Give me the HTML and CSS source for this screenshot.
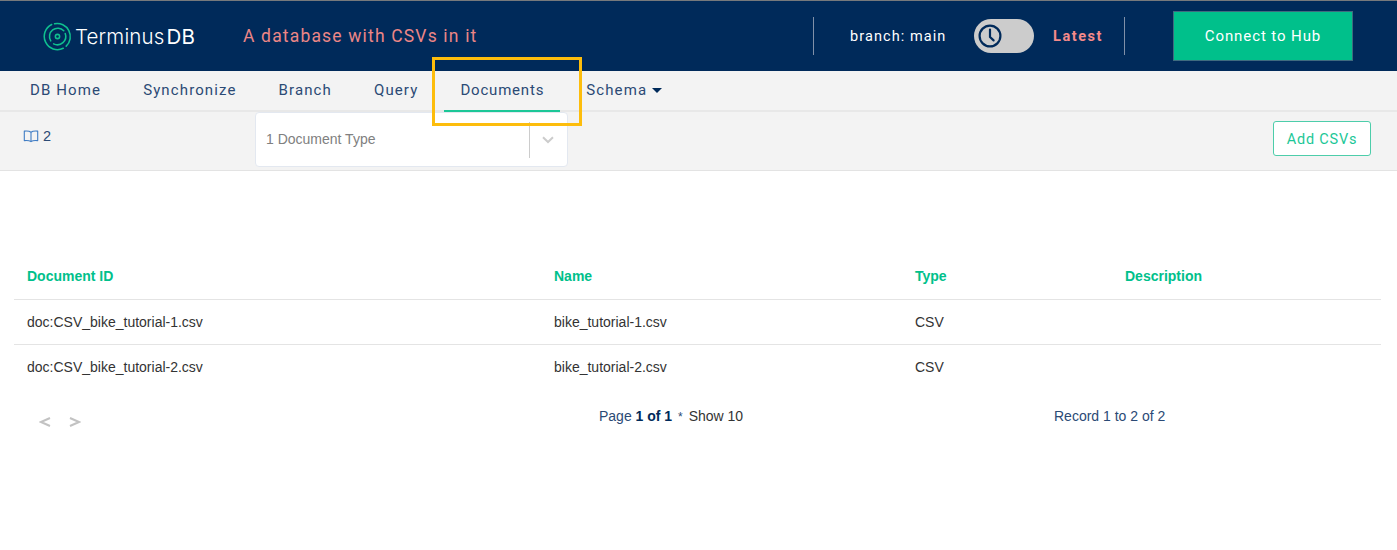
FILE: index.html
```html
<!DOCTYPE html>
<html lang="en">
<head>
  <meta charset="UTF-8" />
  <title>TerminusDB - Documents</title>
  <link rel="stylesheet" href="styles.css">
</head>
<body>
  <header class="topbar">
    <div class="brand">
      <svg class="brand-logo" viewBox="0 0 30 30" width="29" height="29" fill="none" stroke="#0fc08f" stroke-width="1.6" stroke-linecap="round">
        <path d="M9 2.6A13.6 13.6 0 0 0 21 27.2" />
        <path d="M24 25A13.6 13.6 0 0 0 12 1.8" />
        <path d="M8 19.5A8.6 8.6 0 0 1 21.5 9" />
        <path d="M23 12A8.6 8.6 0 0 1 11 22.6" />
        <circle cx="15" cy="15" r="2.2" />
      </svg>
      <span class="brand-name">Terminus<span class="brand-db">DB</span></span>
    </div>
    <div class="db-title">A database with CSVs in it</div>
    <div class="branch-box">
      <span class="branch-name">branch: main</span>
      <span class="time-toggle">
        <svg viewBox="0 0 26 26" width="26" height="26" fill="none" stroke="#002a5a" stroke-width="2.2" stroke-linecap="round" stroke-linejoin="round">
          <circle cx="13" cy="13" r="10.4" />
          <path d="M13 6.5V14l3.6 3.4" />
        </svg>
      </span>
      <span class="branch-latest">Latest</span>
    </div>
    <a class="hub-btn" href="#">Connect to Hub</a>
  </header>

  <nav class="tabs">
    <a href="#">DB Home</a>
    <a href="#">Synchronize</a>
    <a href="#">Branch</a>
    <a href="#">Query</a>
    <a class="active" href="#">Documents</a>
    <a href="#">Schema <span class="caret"></span></a>
  </nav>

  <section class="toolbar">
    <div class="doc-count">
      <svg viewBox="0 0 16 14" width="16" height="14" fill="none" stroke="#3f7cc4" stroke-width="1.1" stroke-linejoin="round">
        <path d="M8 3.2C6.5 2 4 1.8 1.3 2.1V11.6C4 11.3 6.5 11.5 8 12.6C9.5 11.5 12 11.3 14.7 11.6V2.1C12 1.8 9.5 2 8 3.2V12.6" />
      </svg>
      <span>2</span>
    </div>
    <div class="type-select">
      <span class="type-value">1 Document Type</span>
      <span class="type-arrow">
        <svg viewBox="0 0 12 8" width="12" height="8" fill="none" stroke="#cccccc" stroke-width="2">
          <path d="M1 1.2L6 6L11 1.2" />
        </svg>
      </span>
    </div>
    <a class="add-btn" href="#">Add CSVs</a>
  </section>

  <main class="content">
    <table class="doc-table">
      <thead>
        <tr>
          <th class="col-id">Document ID</th>
          <th class="col-name">Name</th>
          <th class="col-type">Type</th>
          <th>Description</th>
        </tr>
      </thead>
      <tbody>
        <tr>
          <td>doc:CSV_bike_tutorial-1.csv</td>
          <td>bike_tutorial-1.csv</td>
          <td>CSV</td>
          <td></td>
        </tr>
        <tr>
          <td>doc:CSV_bike_tutorial-2.csv</td>
          <td>bike_tutorial-2.csv</td>
          <td>CSV</td>
          <td></td>
        </tr>
      </tbody>
    </table>

    <div class="pager">
      <div class="pager-arrows">
        <svg viewBox="0 0 12 12" width="12" height="12" fill="none" stroke="#c2c2c2" stroke-width="2"><path d="M11 2L2 6L11 10" /></svg>
        <svg viewBox="0 0 12 12" width="12" height="12" fill="none" stroke="#c2c2c2" stroke-width="2"><path d="M1 2L10 6L1 10" /></svg>
      </div>
      <div class="pager-info">Page <b>1 of 1</b> <span class="pager-dot">*</span> <span class="pager-show">Show 10</span></div>
      <div class="pager-record">Record 1 to 2 of 2</div>
    </div>
  </main>

  <!-- annotation on top of the screenshot -->
  <div class="highlight"></div>
</body>
</html>
```
FILE: styles.css
```css
* {
  box-sizing: border-box;
}

body {
  margin: 0;
  background: #fff;
  font-family: "Liberation Sans", Arial, sans-serif;
  color: #002a5a;
  position: relative;
  min-height: 550px;
  overflow: hidden;
}

a {
  text-decoration: none;
}

.topbar {
  height: 71px;
  border-top: 1px solid #77797c;
  background: #002a5a;
  display: flex;
  align-items: center;
  font-family: Roboto, sans-serif;
}

.brand {
  display: flex;
  align-items: center;
  margin-left: 43px;
  width: 200px;
  margin-top: 1px;
}

.brand-name {
  font-family: Inter, sans-serif;
  font-size: 20.5px;
  color: #fff;
  margin-left: 3px;
  font-weight: 300;
  letter-spacing: 0.15px;
}

.brand-db {
  margin-left: 2px;
  font-weight: 400;
}

.db-title {
  color: #ec8686;
  font-size: 17.5px;
  letter-spacing: 1.17px;
  width: 570px;
}

.branch-box {
  width: 312px;
  height: 38px;
  display: flex;
  align-items: center;
  border-left: 1px solid #8090a8;
  border-right: 1px solid #8090a8;
  padding-left: 36px;
}

.branch-name {
  color: #fff;
  font-size: 14.5px;
  letter-spacing: 1.08px;
  width: 124px;
}

.time-toggle {
  width: 60px;
  height: 34px;
  border-radius: 17px;
  background: #cccccc;
  display: flex;
  align-items: center;
  padding-left: 3px;
  margin-right: 19px;
}

.branch-latest {
  color: #f58a8a;
  font-size: 14.5px;
  font-weight: 700;
  letter-spacing: 1.55px;
}

.hub-btn {
  margin-left: 48px;
  width: 180px;
  height: 50px;
  background: #00c08b;
  border: 1px solid #3f6b7f;
  color: #fff;
  font-size: 15px;
  letter-spacing: 0.9px;
  display: flex;
  align-items: center;
  justify-content: center;
}

.tabs {
  height: 41px;
  background: #f3f3f3;
  border-bottom: 2px solid #e8e8e8;
  display: flex;
  padding-left: 14px;
  font-family: Roboto, sans-serif;
}

.tabs a {
  color: #2b4a75;
  font-size: 15px;
  letter-spacing: 1.12px;
  padding: 0 16px;
  margin-right: 10px;
  height: 41px;
  line-height: 38px;
  white-space: nowrap;
}

.tabs a.active {
  border-bottom: 2px solid #1cc797;
  letter-spacing: 0.8px;
}

.caret {
  display: inline-block;
  width: 0;
  height: 0;
  vertical-align: 2px;
  border-left: 5px solid transparent;
  border-right: 5px solid transparent;
  border-top: 5px solid #002a5a;
}

.toolbar {
  height: 59px;
  background: #f3f3f3;
  border-bottom: 1px solid #e3e3e3;
  display: flex;
  align-items: flex-start;
  font-size: 14px;
}

.doc-count {
  width: 255px;
  padding: 16px 0 0 23px;
  display: flex;
  align-items: center;
  gap: 4px;
  color: #2b4a75;
  font-size: 14.5px;
}

.type-select {
  width: 313px;
  height: 55px;
  background: #fff;
  border: 1px solid #e3e8f0;
  border-radius: 4px;
  display: flex;
  align-items: center;
  padding-left: 10px;
  color: #808080;
}

.type-value {
  flex: 1;
  padding-bottom: 2px;
}

.type-arrow {
  width: 38px;
  height: 36px;
  border-left: 1px solid #cccccc;
  display: flex;
  align-items: center;
  justify-content: center;
  padding-right: 2px;
}

.add-btn {
  margin: 9px 0 0 705px;
  width: 98px;
  height: 35px;
  padding-top: 1px;
  border: 1px solid #4dcdaa;
  border-radius: 3px;
  background: #fff;
  color: #1cc797;
  font-family: Roboto, sans-serif;
  font-size: 14.5px;
  letter-spacing: 0.8px;
  display: flex;
  align-items: center;
  justify-content: center;
}

.content {
  padding: 82px 16px 0 14px;
}

.doc-table {
  width: 100%;
  border-collapse: collapse;
  table-layout: fixed;
  font-size: 14px;
}

.doc-table th {
  text-align: left;
  color: #00c08b;
  font-weight: 700;
  height: 46px;
  padding: 0 13px;
  border-bottom: 1px solid #e4e4e4;
}

.doc-table td {
  height: 45px;
  padding: 0 13px;
  color: #333;
  border-bottom: 1px solid #e4e4e4;
}

.doc-table tbody tr:last-child td {
  border-bottom: none;
}

.col-id {
  width: 527px;
}

.col-name {
  width: 361px;
}

.col-type {
  width: 210px;
}

.pager {
  display: flex;
  font-size: 14px;
  padding-top: 19px;
  color: #2b4a75;
}

.pager-arrows {
  width: 585px;
  padding: 8px 0 0 25px;
  display: flex;
  gap: 18px;
}

.pager-info {
  width: 455px;
}

.pager-info b {
  color: #002a5a;
}

.pager-dot {
  font-size: 12px;
  margin: 0 2px;
}

.pager-show {
  color: #333;
}

.highlight {
  position: absolute;
  left: 432px;
  top: 57px;
  width: 150px;
  height: 69px;
  border: 3px solid #fdbd0c;
}
```
